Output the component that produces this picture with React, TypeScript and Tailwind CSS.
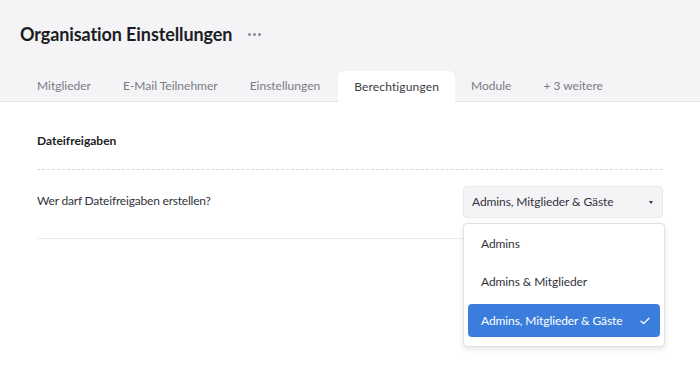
import React from 'react';

const tabs = ['Mitglieder', 'E-Mail Teilnehmer', 'Einstellungen', 'Berechtigungen', 'Module', '+ 3 weitere'];

export default function App() {
  return (
    <div className="w-[700px] h-[385px] bg-white text-[#1c1c24] overflow-hidden" style={{ fontFamily: 'Lato, "Open Sans", sans-serif' }}>
      {/* HEADER */}
      <div className="bg-[#f4f4f6] border-b border-[#e6e6ea]">
        <div className="flex items-center h-[68px] pl-5">
          <h1 className="text-[18px] font-bold tracking-[-0.1px]">Organisation Einstellungen</h1>
          <div className="ml-4 flex gap-[2px] mt-[1px]">
            <span className="w-[3px] h-[3px] rounded-full bg-[#8a8a94]" />
            <span className="w-[3px] h-[3px] rounded-full bg-[#8a8a94]" />
            <span className="w-[3px] h-[3px] rounded-full bg-[#8a8a94]" />
          </div>
        </div>
        <div className="flex pl-[21px] h-[33px] items-end">
          {tabs.map((t) => (
            <div
              key={t}
              className={
                t === 'Berechtigungen'
                  ? 'h-[31px] px-4 flex items-center bg-white rounded-t-md text-[12px] tracking-[0.15px] text-[#3a3a44] -mb-px ml-[2px]'
                  : 'h-[31px] px-4 flex items-center text-[12px] text-[#7a7a84]'
              }
            >
              {t}
            </div>
          ))}
        </div>
      </div>

      {/* CONTENT */}
      <div className="px-[37px] pt-[31px]">
        <div className="text-[12px] font-bold leading-4 pb-[20px]">Dateifreigaben</div>
        <div className="border-t border-dashed border-[#d8d8dc]" />
        <div className="flex items-center justify-between pt-[16px] pb-[20px] border-b border-[#ececf0]">
          <span className="text-[12px] tracking-[-0.2px] text-[#33333c] -mt-[2px]">Wer darf Dateifreigaben erstellen?</span>
          <div className="relative">
            <div className="w-[200px] h-[32px] bg-[#f4f4f6] border border-[#e8e8ec] rounded flex items-center justify-between pl-2 pr-[9px] text-[12px] tracking-[-0.1px] text-[#33333c]">
              <span>Admins, Mitglieder &amp; Gäste</span>
              <span className="w-0 h-0 border-l-[2.5px] border-r-[2.5px] border-t-[3px] border-l-transparent border-r-transparent border-t-[#33333c]" />
            </div>
            <div className="absolute left-0 top-[37px] w-[202px] bg-white border border-[#e2e2e6] rounded shadow-[0_2px_6px_rgba(0,0,0,0.1)] px-1 pt-[4px] pb-[9px] text-[12px] tracking-[-0.1px] text-[#33333c]">
              <div className="h-[32px] flex items-center pl-[13px]">Admins</div>
              <div className="h-[44px] flex items-center pl-[13px]">Admins &amp; Mitglieder</div>
              <div className="h-[33px] flex items-center justify-between pl-[13px] pr-[10px] rounded bg-[#3b7ddd] text-white">
                <span>Admins, Mitglieder &amp; Gäste</span>
                <svg width="10" height="8" viewBox="0 0 10 8" fill="none">
                  <path d="M1 4.2L3.7 6.6L9 1.3" stroke="white" strokeWidth="1.3" strokeLinecap="round" strokeLinejoin="round" />
                </svg>
              </div>
            </div>
          </div>
        </div>
      </div>
    </div>
  );
}
